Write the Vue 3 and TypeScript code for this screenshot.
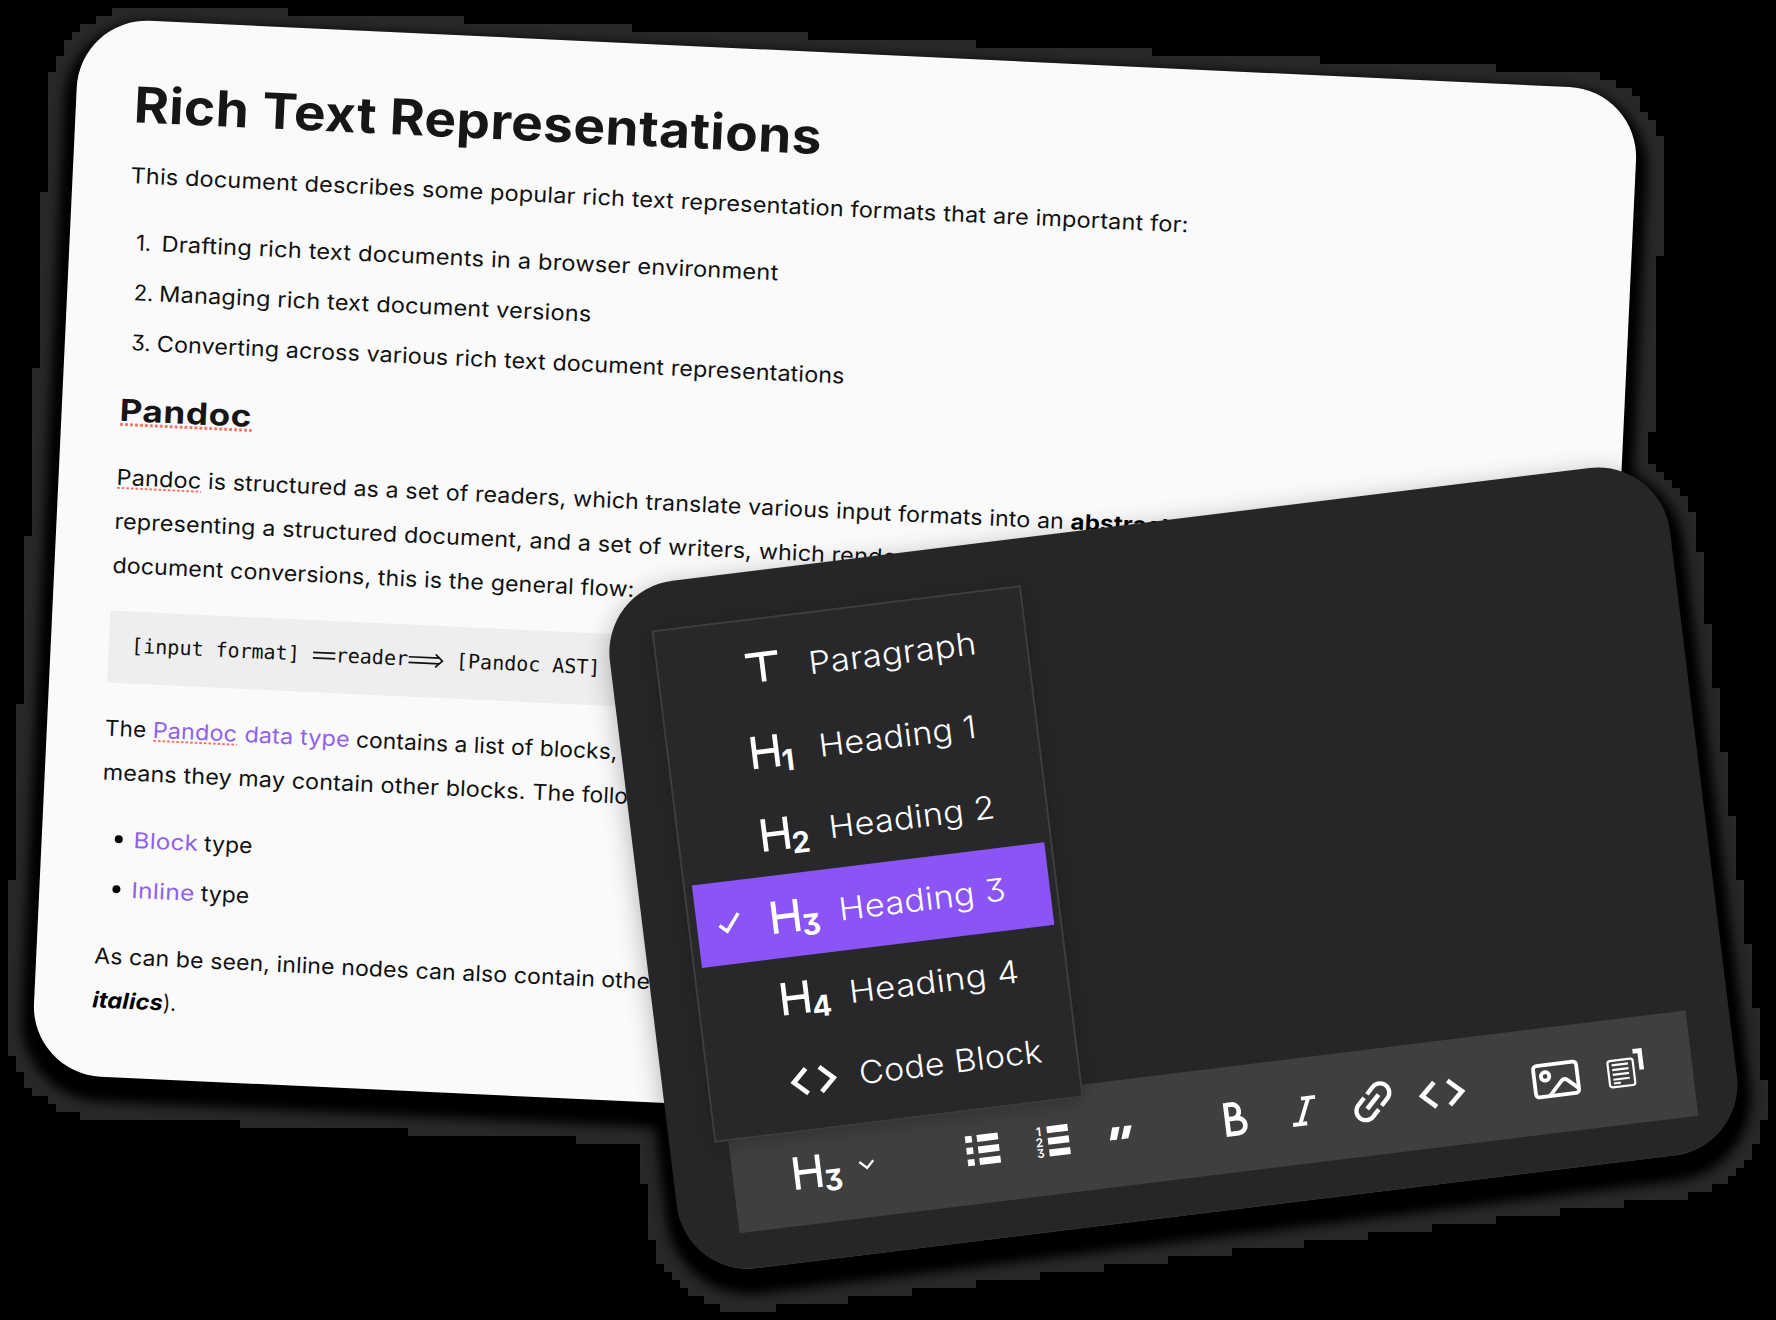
<script setup lang="ts">
interface Card {
  x: number
  y: number
  w: number
  h: number
  r: number
  deg: number
}

interface MenuItem {
  label: string
  width: number
  icon: 'text' | 'heading' | 'code'
  level?: number
  active?: boolean
}

const page: Card = { x: 80.7, y: 13.8, w: 1560.5, h: 1056.6, r: 70, deg: 2.67 }
const panel: Card = { x: 524.8, y: 658.3, w: 1067.8, h: 693.4, r: 72, deg: -7 }

const CELL = 8
const SPREAD = 24.2
const DROP = 13

// Distance from a point to the edge of a card's dropped, rounded outline.
function distance(card: Card, px: number, py: number): number {
  const a = (card.deg * Math.PI) / 180
  const y = py - DROP
  const u = px * Math.cos(a) + y * Math.sin(a)
  const v = -px * Math.sin(a) + y * Math.cos(a)
  const qx = Math.abs(u - card.x - card.w / 2) - card.w / 2 + card.r
  const qy = Math.abs(v - card.y - card.h / 2) - card.h / 2 + card.r
  return Math.hypot(Math.max(qx, 0), Math.max(qy, 0)) + Math.min(Math.max(qx, qy), 0) - card.r
}

function covered(cx: number, cy: number): boolean {
  return [page, panel].some((card) =>
    [0, CELL].some((dx) => [0, CELL].some((dy) => distance(card, cx + dx, cy + dy) < SPREAD)),
  )
}

// Blocky glow around both cards, one horizontal run per grid row.
function haloPath(): string {
  let d = ''
  for (let y = 0; y < 1320; y += CELL) {
    let start = -1
    for (let x = 0; x <= 1776; x += CELL) {
      const on = x < 1776 && covered(x, y)
      if (on && start < 0) start = x
      if (!on && start >= 0) {
        d += `M${start} ${y}H${x}V${y + CELL}H${start}Z`
        start = -1
      }
    }
  }
  return d
}
const halo = haloPath()

// Sets a run of text to the given measure: a little tracking, the rest as glyph width.
const TRACKING = 0.15
const vFit = {
  mounted(el: HTMLElement, binding: { value: number }) {
    const natural = el.getBoundingClientRect().width ? el.offsetWidth : 1
    const count = (el.textContent ?? '').length
    const tracked = natural + (binding.value - natural) * TRACKING
    el.style.letterSpacing = `${(tracked - natural) / count}px`
    el.style.width = `${tracked}px`
    el.style.marginRight = `${binding.value - tracked}px`
    el.style.transform = `scaleX(${binding.value / tracked})`
  },
}

const steps = [
  { text: 'Drafting rich text documents in a browser environment', width: 618 },
  { text: 'Managing rich text document versions', width: 433 },
  { text: 'Converting across various rich text document representations', width: 689 },
]

const types = [
  { name: 'Block', width: 64.5 },
  { name: 'Inline', width: 63.5 },
]

const menu: MenuItem[] = [
  { label: 'Paragraph', width: 168.5, icon: 'text' },
  { label: 'Heading 1', width: 159, icon: 'heading', level: 1 },
  { label: 'Heading 2', width: 167.5, icon: 'heading', level: 2 },
  { label: 'Heading 3', width: 167.5, icon: 'heading', level: 3, active: true },
  { label: 'Heading 4', width: 171, icon: 'heading', level: 4 },
  { label: 'Code Block', width: 184.5, icon: 'code' },
]
</script>

<template>
  <main class="stage">
    <svg class="halo" width="1776" height="1320"><path :d="halo" /></svg>
    <div class="card page-place under"></div>
    <div class="card panel-place under"></div>

    <article class="card page-place page">
      <h1><span v-fit="689">Rich Text Representations</span></h1>
      <p class="intro">
        <span v-fit="1059">This document describes some popular rich text representation formats that are important for:</span>
      </p>
      <ol>
        <li v-for="(s, i) in steps" :key="i">
          <span class="num">{{ i + 1 }}.</span><span v-fit="s.width">{{ s.text }}</span>
        </li>
      </ol>
      <h2><span v-fit="133" class="typo">Pandoc</span></h2>
      <div class="para">
        <div class="line">
          <span v-fit="85" class="typo">Pandoc</span><span v-fit="870"> is structured as a set of readers, which translate various input formats into an </span><b v-fit="100">abstract</b>
        </div>
        <div class="line">
          <span v-fit="711">representing a structured document, and a set of writers, which</span><span v-fit="81"> render</span>
        </div>
        <div class="line"><span v-fit="523">document conversions, this is the general flow:</span></div>
      </div>
      <pre class="code"><code>[input format] <span class="lig">==<svg width="24" height="12" viewBox="0 0 24 12"><path d="M1.5 3.2H24M1.5 8.8H24" /></svg></span>reader<span class="lig">==><svg width="36" height="16" viewBox="0 0 36 16"><path d="M0 5.2H31.5M0 10.8H31.5M27 1.5L34 8L27 14.5" /></svg></span> [Pandoc AST] ==writer==> [output format]</code></pre>
      <div class="para">
        <div class="line">
          <span v-fit="48">The </span><a v-fit="84.5" class="typo">Pandoc</a><a v-fit="112"> data type</a><span v-fit="268.5"> contains a list of blocks,</span>
        </div>
        <div class="line">
          <span v-fit="473">means they may contain other blocks. The</span><span v-fit="104"> following</span>
        </div>
      </div>
      <ul>
        <li v-for="t in types" :key="t.name">
          <i class="dot"></i><a v-fit="t.width">{{ t.name }}</a><span v-fit="55"> type</span>
        </li>
      </ul>
      <div class="para">
        <div class="line">
          <span v-fit="501">As can be seen, inline nodes can also contain</span><span v-fit="64"> other</span>
        </div>
        <div class="line"><b v-fit="70.5" class="slant">italics</b><span v-fit="12.5">).</span></div>
      </div>
    </article>

    <section class="card panel-place panel">
      <div class="menu">
        <div v-for="m in menu" :key="m.label" class="item" :class="{ active: m.active }">
          <span class="tick">
            <svg v-if="m.active" width="24" height="22" viewBox="0 0 24 22">
              <path d="M1.5 12L8.6 18.6L21.6 2" fill="none" stroke="#fff" stroke-width="3.4" />
            </svg>
          </span>
          <svg class="glyph" width="50" height="48" viewBox="0 -24 50 48">
            <path v-if="m.icon === 'text'" d="M6.5 -14.2H39M22.8 -14.2V13.2" />
            <template v-else-if="m.icon === 'heading'">
              <path d="M4.2 -16.2V16.2M26.2 -16.2V16.2M4.2 -.4H26.2" />
              <text x="30.6" y="21.4">{{ m.level }}</text>
            </template>
            <path v-else d="M16.5 -11.5L3.2 1L16.5 13.5M30 -11.5L43.3 1L30 13.5" />
          </svg>
          <span v-fit="m.width" class="label">{{ m.label }}</span>
        </div>
      </div>

      <div class="toolbar">
        <svg class="glyph" width="50" height="48" viewBox="0 -24 50 48">
          <path d="M4 -15.8V16.8M26 -15.8V16.8M4 0H26" />
          <text x="30.6" y="21.8">3</text>
        </svg>
        <svg class="glyph caret" width="17" height="48" viewBox="0 -24 17 48">
          <path d="M1.5 -3.2L8.5 3.6L15.5 -3.2" />
        </svg>
        <svg class="solid g-bullets" width="34" height="48" viewBox="0 -24 34 48">
          <path d="M.2 -15.6h6.8v6.6H.2zM.2 -4h6.8v6.6H.2zM.2 7.7h6.8v6.6H.2zM12 -15.8h21.2v7H12zM12 -4.2h21.2v7H12zM12 7.5h21.2v7H12z" />
        </svg>
        <svg class="solid g-numbers" width="33" height="48" viewBox="0 -24 33 48">
          <text x=".6" y="-7">1</text>
          <text x="-1.2" y="4">2</text>
          <text x="-1.2" y="14.8">3</text>
          <path d="M11.3 -15.8h21.2v7H11.3zM11.3 -4.2h21.2v7H11.3zM11.3 7.5h21.2v7H11.3z" />
        </svg>
        <svg class="solid g-quote" width="25" height="48" viewBox="0 -24 25 48">
          <path d="M4.6 -6.6H12.2L7.8 6H.8zM16.7 -6.6H24.3L19.4 6H12.4z" />
        </svg>
        <svg class="glyph g-bold" width="23" height="48" viewBox="0 -24 23 48">
          <path d="M2.7 -14.9H9.6A7.2 7.2 0 0 1 9.6 -.8H2.7M9.6 -.8H12.6A7.6 7.6 0 0 1 12.6 14.4H2.7V-17.2" />
        </svg>
        <svg class="glyph thin g-italic" width="26" height="48" viewBox="0 -24 26 48">
          <path d="M11.6 -12.4H25.8M.6 12.9H14.8M18.8 -12.4L7.8 12.9" />
        </svg>
        <svg class="solid g-link" width="55.2" height="55.2" viewBox="0 0 24 24">
          <path transform="rotate(-45 12 12)" d="M3.9 12c0-1.71 1.39-3.1 3.1-3.1h4V7H7c-2.76 0-5 2.24-5 5s2.24 5 5 5h4v-1.9H7c-1.71 0-3.1-1.39-3.1-3.1zM8 13h8v-2H8v2zm9-6h-4v1.9h4c1.71 0 3.1 1.39 3.1 3.1s-1.39 3.1-3.1 3.1h-4V17h4c2.76 0 5-2.24 5-5s-2.24-5-5-5z" />
        </svg>
        <svg class="glyph g-code" width="46.5" height="48" viewBox="0 -24 46.5 48">
          <path d="M16.5 -12.3L3.2 0L16.5 12.3M30 -12.3L43.3 0L30 12.3" />
        </svg>
        <svg class="glyph thin g-image" width="48" height="48" viewBox="0 -24 48 48">
          <rect x="2.4" y="-16" width="43.4" height="31.6" rx="3.6" />
          <circle cx="13.6" cy="-4.6" r="4.2" />
          <path d="M16 15.6L29.5 1.6Q32.4 -.9 35.3 1.6L45.5 11" />
        </svg>
        <svg class="g-doc" width="38" height="48" viewBox="0 -24 38 48">
          <rect x="2" y="-12" width="25.4" height="26.6" rx="2.6" />
          <path d="M6 -7.4H22.4M6 -2.6H22.4M6 2.2H22.4M6 7H22.4M6 10.8H13" />
          <path class="mark" d="M28.4 -18.8H35.4V.4" />
        </svg>
      </div>
    </section>
  </main>
</template>

<style>
body {
  background: #000;
}
</style>

<style scoped>
.stage {
  position: relative;
  width: 1776px;
  height: 1320px;
  overflow: hidden;
  background: #000;
  font-family: Inter, 'Open Sans', sans-serif;
  font-feature-settings: 'cv09';
}
.halo {
  position: absolute;
  inset: 0;
  fill: #282828;
}
.card {
  position: absolute;
  left: 0;
  top: 0;
  box-sizing: border-box;
  transform-origin: 0 0;
}
.page-place {
  width: 1560.5px;
  height: 1056.6px;
  border-radius: 70px;
  transform: rotate(2.67deg) translate(80.7px, 13.8px);
}
.panel-place {
  width: 1067.8px;
  height: 693.4px;
  border-radius: 72px;
  transform: rotate(-7deg) translate(524.8px, 658.3px);
}
.under {
  background: #000;
  box-shadow: 0 13px 11px 12px #000;
}

/* document */
.page {
  padding: 54.2px 59px 0 58.4px;
  background: #fafafa;
  color: #111;
  font-size: 21.8px;
  font-weight: 380;
  line-height: 44px;
  overflow: hidden;
}
.page span,
.page a,
.page b {
  display: inline-block;
  flex: none;
  white-space: pre;
  transform-origin: 0 50%;
}
h1 {
  margin: 0;
  font-size: 49.4px;
  font-weight: 700;
  line-height: 60px;
  color: #161616;
}
.intro {
  margin: 18.8px 0 0;
}
ol,
ul {
  margin: 22.9px 0 0;
  padding: 0;
  list-style: none;
  display: flex;
  flex-direction: column;
  gap: 6.2px;
}
li {
  display: flex;
  align-items: center;
}
.page .num {
  width: 25px;
  box-sizing: border-box;
  margin-left: 8.2px;
}
h2 {
  margin: 25.5px 0 25.3px;
  font-size: 30.4px;
  font-weight: 700;
  line-height: 40px;
  color: #161616;
}
.line {
  display: flex;
  height: 44.1px;
}
.line b {
  color: #000;
  font-weight: 700;
}
.slant {
  font-style: italic;
}
.typo {
  position: relative;
}
.typo::after {
  content: '';
  position: absolute;
  left: 0;
  right: 0;
  top: 31.8px;
  height: 2.6px;
  background: radial-gradient(circle at 50% 50%, #ee7468 1.15px, transparent 1.55px) 0 0 / 4.3px 2.6px;
}
h2 .typo::after {
  top: 33.6px;
}
.code {
  height: 72px;
  margin: 23.8px 0 22.7px;
  padding: 0 0 0 22.2px;
  background: #eee;
  line-height: 68px;
}
.code code {
  font-family: 'DejaVu Sans Mono', monospace;
  font-size: 20px;
}
.page .lig {
  position: relative;
  color: transparent;
}
.lig svg {
  position: absolute;
  left: 0;
  top: 51%;
  transform: translateY(-50%);
  fill: none;
  stroke: #111;
  stroke-width: 1.7;
}
a {
  color: #9061ea;
}
.dot {
  width: 8px;
  height: 8px;
  margin: 0 11px 0 14.4px;
  border-radius: 50%;
  background: #000;
}
ul {
  margin-bottom: 23.2px;
}

/* editor panel */
.panel {
  display: flex;
  flex-direction: column;
  padding: 46.6px 43px 0 45.2px;
  background: #262626;
  border-bottom: 1px solid #343434;
  box-shadow: 0 6px 26px rgba(0, 0, 0, 0.3);
}
.menu {
  position: relative;
  z-index: 1;
  box-sizing: border-box;
  width: 371.8px;
  height: 516px;
  padding: 8.5px 6px 0 7px;
  background: #28282a;
  border: 2px solid #3d3d3d;
  box-shadow: 0 4px 18px rgba(0, 0, 0, 0.2);
}
.item {
  display: flex;
  align-items: center;
  height: 82.7px;
  padding-left: 21px;
}
.active {
  background: #8b54f7;
}
.tick {
  width: 24px;
  height: 22px;
  margin-right: 29px;
}
.tick svg {
  display: block;
}
.label {
  flex: none;
  margin-left: 18.8px;
  color: #fff;
  font-size: 31.6px;
  font-weight: 300;
  white-space: pre;
  transform-origin: 0 50%;
}
.glyph {
  flex: none;
  fill: none;
  stroke: #fff;
  stroke-width: 4.7;
  overflow: visible;
}
.glyph text {
  fill: #fff;
  stroke: none;
  font-size: 29px;
  font-weight: 700;
}
.toolbar {
  display: flex;
  align-items: center;
  height: 106px;
  margin: -12.6px 0 0 14px;
  padding-left: 59.6px;
  background: #3f3f3f;
}
.toolbar svg {
  flex: none;
  overflow: visible;
}
.solid {
  fill: #fff;
}
.solid text {
  font-size: 12px;
  font-weight: 600;
}
.caret {
  margin-left: 16.4px;
  stroke-width: 2.3;
}
.thin {
  stroke-width: 3.8;
}
.g-bullets {
  margin-left: 92px;
}
.g-numbers {
  margin-left: 36.5px;
}
.g-quote {
  margin-left: 39.5px;
}
.g-bold {
  margin-left: 91.6px;
}
.g-italic {
  margin-left: 44.4px;
}
.g-link {
  margin-left: 28.9px;
}
.g-code {
  margin-left: 18.4px;
}
.g-image {
  margin-left: 67.5px;
}
.g-doc {
  margin-left: 27.5px;
  fill: none;
  stroke: #fff;
  stroke-width: 2.2;
}
.mark {
  stroke-width: 4.6;
}
</style>
